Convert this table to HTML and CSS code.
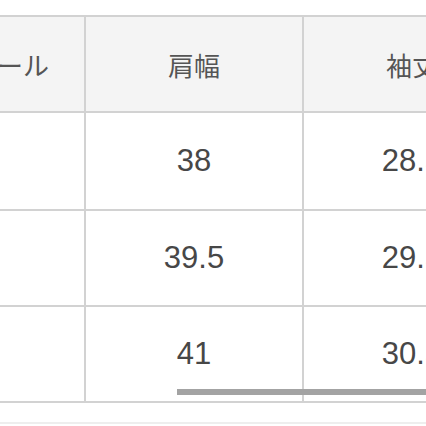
FILE: index.html
```html
<!DOCTYPE html>
<html lang="ja">
<head>
<meta charset="utf-8">
<link rel="stylesheet" href="styles.css">
</head>
<body>
<div class="viewport">
  <table class="size-table">
    <colgroup>
      <col class="col-label">
      <col class="col-val">
      <col class="col-val">
      <col class="col-val">
    </colgroup>
    <thead>
      <tr>
        <th>ディテール</th>
        <th>肩幅</th>
        <th>袖丈</th>
        <th>着丈</th>
      </tr>
    </thead>
    <tbody>
      <tr class="row-first">
        <td>S</td>
        <td>38</td>
        <td>28.5</td>
        <td>60</td>
      </tr>
      <tr>
        <td>M</td>
        <td>39.5</td>
        <td>29.5</td>
        <td>62</td>
      </tr>
      <tr>
        <td>L</td>
        <td>41</td>
        <td>30.5</td>
        <td>64</td>
      </tr>
    </tbody>
  </table>
  <div class="scroll-indicator"></div>
  <div class="bottom-rule"></div>
</div>
</body>
</html>
```

FILE: styles.css
```css
html, body {
  margin: 0;
  padding: 0;
  background: #ffffff;
}

.viewport {
  position: relative;
  width: 426px;
  height: 426px;
  overflow: hidden;
  padding-top: 15px;
  box-sizing: border-box;
  font-family: "Liberation Sans", "Noto Sans CJK JP", sans-serif;
}

.size-table {
  border-collapse: collapse;
  table-layout: fixed;
  margin-left: -120px;
  width: 858px;
}

.col-label {
  width: 204px;
}

.col-val {
  width: 218px;
}

.size-table th,
.size-table td {
  border: 2px solid #d2d2d2;
  text-align: center;
  vertical-align: middle;
  padding: 0;
  height: 94px;
}

.size-table .row-first td {
  height: 96px;
}

.size-table th {
  background: #f4f4f4;
  font-weight: normal;
  font-size: 26px;
  color: #555555;
}

.size-table th:first-child {
  padding-left: 4px;
}

.size-table td {
  background: #ffffff;
  font-size: 31px;
  color: #474747;
}

.scroll-indicator {
  position: absolute;
  left: 177px;
  right: 0;
  top: 389px;
  height: 6px;
  background: #a3a3a3;
}

.bottom-rule {
  position: absolute;
  left: 0;
  right: 0;
  top: 422px;
  height: 2px;
  background: #eeeeee;
}
```
